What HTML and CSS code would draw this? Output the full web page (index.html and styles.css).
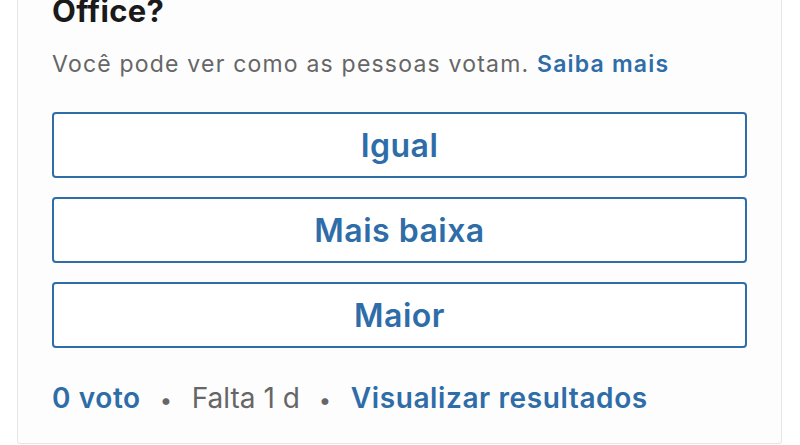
FILE: index.html
```html
<!DOCTYPE html>
<html lang="pt">
<head>
    <meta charset="UTF-8">
    <meta name="viewport" content="width=device-width, initial-scale=1.0">
    <title>Enquete</title>
    <link rel="stylesheet" href="styles.css">
</head>
<body>
    <div class="card">
        <h2 class="question">Office?</h2>
        <p class="hint">Você pode ver como as pessoas votam. <a href="#" class="link">Saiba mais</a></p>
        <div class="options">
            <button class="option">Igual</button>
            <button class="option">Mais baixa</button>
            <button class="option">Maior</button>
        </div>
        <div class="meta">
            <a href="#" class="link">0 voto</a>
            <span class="dot">•</span>
            <span class="time-left">Falta 1 d</span>
            <span class="dot">•</span>
            <a href="#" class="link">Visualizar resultados</a>
        </div>
    </div>
</body>
</html>
```

FILE: styles.css
```css
* {
    box-sizing: border-box;
}
body {
    font-family: Inter, "Noto Sans", sans-serif;
    margin: 0;
    background-color: #ffffff;
    overflow: hidden;
}
.card {
    display: flow-root;
    margin-left: 17px;
    width: 765px;
    height: 444px;
    padding: 0 34px;
    background: #fdfdfd;
    border: 1px solid #e6e6e6;
    border-top: none;
    border-radius: 0 0 3px 3px;
}
.question {
    margin: -7px 0 0;
    font-size: 31px;
    line-height: 36px;
    font-weight: 700;
    color: #1a1a1a;
    letter-spacing: 0.3px;
}
.hint {
    margin: 21px 0 0;
    font-size: 23px;
    line-height: 28px;
    color: #666666;
    letter-spacing: 1.2px;
}
.link {
    color: #2e6da8;
    font-weight: 600;
    text-decoration: none;
}
.options {
    display: flex;
    flex-direction: column;
    gap: 19px;
    margin-top: 34px;
}
.option {
    height: 66px;
    border: 2px solid #2e6da8;
    border-radius: 4px;
    background: #ffffff;
    color: #2e6da8;
    font-family: inherit;
    font-size: 32px;
    font-weight: 600;
    letter-spacing: 0.5px;
}
.meta {
    display: flex;
    align-items: baseline;
    gap: 19px;
    margin-top: 33px;
    font-size: 28px;
    color: #666666;
    letter-spacing: 0.6px;
}
.time-left {
    letter-spacing: 0;
}
.dot {
    font-size: 22px;
}
```
